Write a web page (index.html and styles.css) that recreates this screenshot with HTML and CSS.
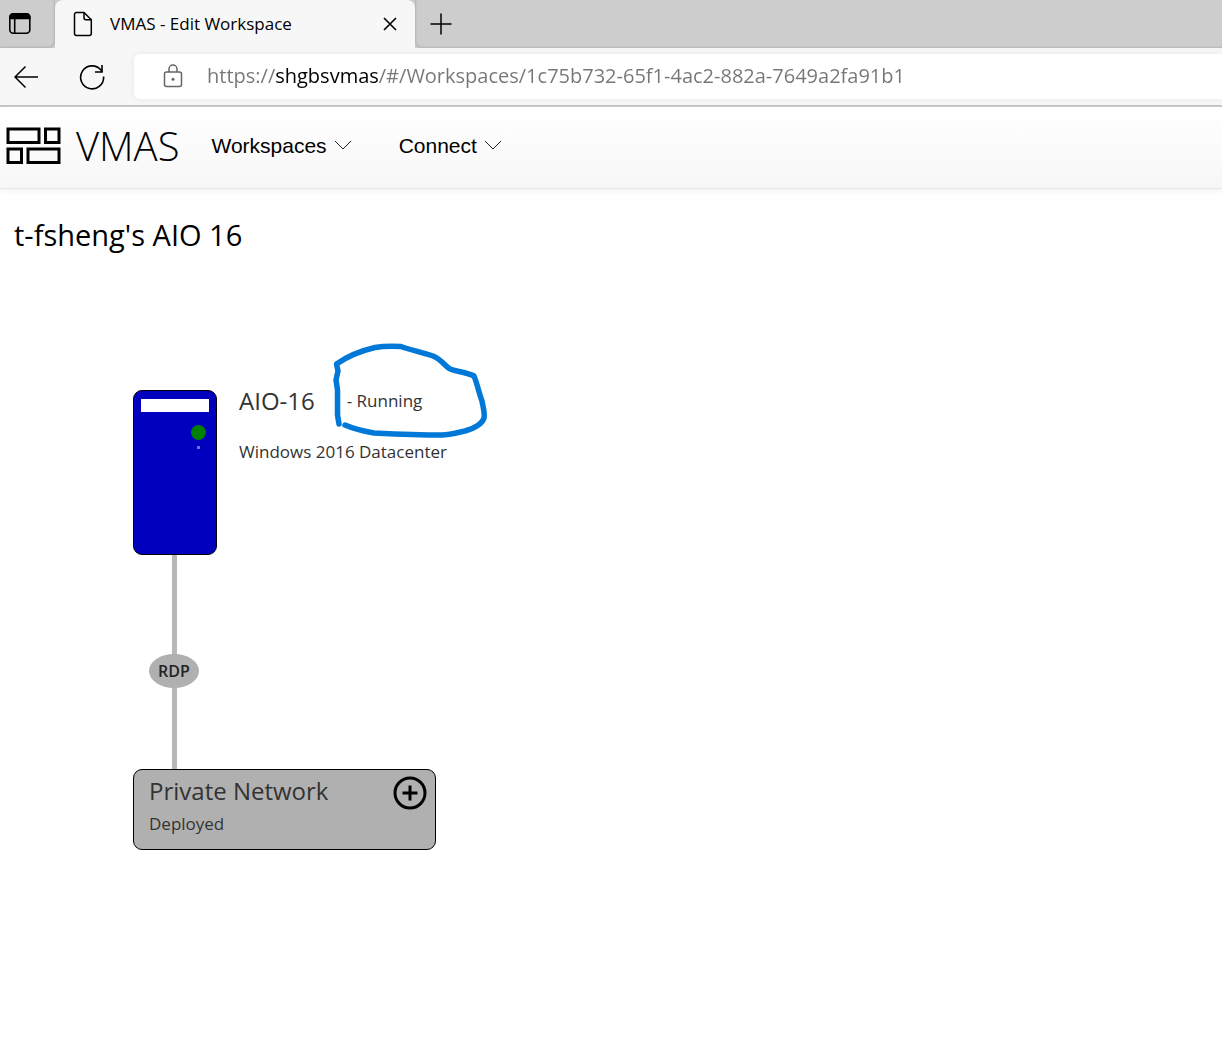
FILE: index.html
```html
<!DOCTYPE html>
<html lang="en">
<head>
<meta charset="utf-8">
<title>VMAS - Edit Workspace</title>
<link rel="stylesheet" href="styles.css">
</head>
<body>
<div class="browser">
  <div class="tab-strip">
    <button class="tab-actions" type="button" aria-label="Tab actions">
      <svg width="24" height="24" viewBox="0 0 24 24" fill="none" stroke="#000" stroke-width="1.6"><rect x="1.8" y="1.8" width="20" height="19.4" rx="3.5"/><path d="M2 5.500V5a3.200 3.200 0 0 1 3.200-3.200h13.400A3.200 3.200 0 0 1 21.800 5v1.500H2z" fill="#000"/><path d="M6.700 6v15"/></svg>
    </button>
    <div class="tab">
      <svg class="tab-page" width="20" height="26" viewBox="0 0 20 26" fill="none" stroke="#000" stroke-width="1.500" stroke-linejoin="round"><path d="M3.500 1.500H11L18.300 8.800V22.500a2 2 0 0 1-2 2H3.500a2 2 0 0 1-2-2v-19a2 2 0 0 1 2-2z"/><path d="M11 1.500v5.300a2 2 0 0 0 2 2h5.300"/></svg>
      <span class="tab-title">VMAS - Edit Workspace</span>
      <button class="tab-close" type="button" aria-label="Close tab">
        <svg width="14" height="14" viewBox="0 0 14 14" stroke="#000" stroke-width="1.600"><path d="M1 1l12 12M13 1L1 13"/></svg>
      </button>
    </div>
    <button class="tab-new" type="button" aria-label="New tab">
      <svg width="22" height="22" viewBox="0 0 22 22" stroke="#000" stroke-width="1.500"><path d="M11 .5v21M.5 11h21"/></svg>
    </button>
  </div>
  <div class="toolbar">
    <button class="tool" type="button" aria-label="Back">
      <svg width="26" height="24" viewBox="0 0 26 24" fill="none" stroke="#000" stroke-width="1.500"><path d="M12.500 1.500L2 12l10.500 10.500M2 12h23"/></svg>
    </button>
    <button class="tool" type="button" aria-label="Refresh">
      <svg width="26" height="26" viewBox="0 0 26 26" fill="none" stroke="#000" stroke-width="1.600"><path d="M24.600 12.500A11.500 11.500 0 1 1 21.800 5.800L23 8"/><path d="M23 1v7h-7"/></svg>
    </button>
    <label class="address">
      <svg width="20" height="24" viewBox="0 0 20 24" fill="none" stroke="#666" stroke-width="1.500"><rect x="1.500" y="8" width="17" height="14.500" rx="2"/><path d="M6 8V5a4 4 0 0 1 8 0v3"/><circle cx="10" cy="15.200" r="1.500" fill="#666" stroke="none"/></svg>
      <input class="address-input" type="text" aria-label="Address" value="https://shgbsvmas/#/Workspaces/1c75b732-65f1-4ac2-882a-7649a2fa91b1">
    </label>
  </div>
</div>

<header class="site-header">
  <a class="brand" href="#">
    <svg width="56" height="38" viewBox="0 0 56 38" fill="none" stroke="#000" stroke-width="3"><path d="M2 2h31v13.500H2zM39.500 2H53v13.500H39.500zM2 22h13.500v13.500H2zM22 22h31v13.500H22z"/></svg>
    <span>VMAS</span>
  </a>
  <nav class="menu">
    <button class="menu-item" type="button">Workspaces
      <svg width="18" height="12" viewBox="0 0 18 12" fill="none" stroke="#222"><path d="M1 1l8 8 8-8"/></svg>
    </button>
    <button class="menu-item" type="button">Connect
      <svg width="18" height="12" viewBox="0 0 18 12" fill="none" stroke="#222"><path d="M1 1l8 8 8-8"/></svg>
    </button>
  </nav>
</header>

<main class="workspace">
  <h1 class="workspace-title">t-fsheng's AIO 16</h1>
  <div class="canvas">
    <div class="link"></div>
    <section class="machine">
      <div class="server">
        <div class="server-slot"></div>
        <div class="server-light"></div>
        <div class="server-dot"></div>
      </div>
      <div class="machine-info">
        <div class="machine-head">
          <h2 class="node-name">AIO-16</h2>
          <span class="node-text">- Running</span>
        </div>
        <p class="node-text">Windows 2016 Datacenter</p>
      </div>
    </section>
    <span class="protocol">RDP</span>
    <section class="network">
      <div class="network-info">
        <h2 class="node-name">Private Network</h2>
        <p class="node-text">Deployed</p>
      </div>
      <button class="network-add" type="button" aria-label="Add to network">
        <svg width="34" height="34" viewBox="0 0 34 34" fill="none" stroke="#000" stroke-width="3"><circle cx="17" cy="17" r="15"/><path d="M17 9.500v15M9.500 17h15"/></svg>
      </button>
    </section>
    <svg class="ink" width="160" height="100" viewBox="330 340 160 100" fill="none" stroke="#0078d7" stroke-width="5.500" stroke-linecap="round" stroke-linejoin="round"><path d="M339 424L337.500 415V390L336 380L338 371L336.500 364C345 358 360 351 375 347.500C384 346 391 346 401 346.500C410 350 422 352 433 356C442 360 445 366 450 369C458 372 466 372 474 376C477 383 479 393 482 401C483 407 485 413 484 418C482 425 472 429 465 431C456 433 448 435 442 435C420 435 395 434 374 433C363 431 354 429 345 425"/></svg>
  </div>
</main>
</body>
</html>
```
FILE: styles.css
```css
* {
  box-sizing: border-box;
}

body {
  margin: 0;
  background: #fff;
  color: #000;
  font-family: "Open Sans", "Noto Sans", sans-serif;
}

h1, h2, p {
  margin: 0;
  font-weight: 400;
}

button {
  margin: 0;
  padding: 0;
  border: 0;
  background: none;
  color: inherit;
  cursor: pointer;
}

svg {
  display: block;
  flex: none;
}

.browser {
  background: #f7f7f7;
  border-bottom: 2px solid #bdbdbd;
}

.tab-strip {
  display: flex;
  height: 48px;
  background: #cdcdcd;
}

.tab-actions {
  display: flex;
  align-items: center;
  width: 55px;
  padding-left: 8px;
  border-bottom-right-radius: 6px;
  box-shadow: inset -1px -1px 2px #b4b4b4;
}

.tab {
  display: flex;
  align-items: center;
  width: 360px;
  padding: 0 18px;
  background: #f7f7f7;
  border-radius: 8px 8px 0 0;
}

.tab-title {
  flex: 1;
  margin-left: 17px;
  padding-bottom: 2px;
  font-size: 17px;
  white-space: nowrap;
}

.tab-new {
  display: flex;
  flex: 1;
  align-items: center;
  padding-left: 15px;
  border-bottom-left-radius: 6px;
  box-shadow: inset 1px -1px 2px #b4b4b4;
}

.toolbar {
  display: flex;
  align-items: center;
  gap: 40px;
  padding: 6px 0 6px 13px;
}

.tool {
  flex: none;
}

.address {
  display: flex;
  flex: 1;
  align-items: center;
  gap: 24px;
  height: 45px;
  margin-left: -11px;
  padding: 0 0 2px 29px;
  background: #fff;
  border-radius: 6px 0 0 6px;
  box-shadow: 0 0 6px #e8e8e8;
}

/* The host name is dark, the rest of the address is grey. */
.address-input {
  flex: 1;
  min-width: 0;
  padding: 0;
  border: 0;
  outline: 0;
  background: linear-gradient(90deg, #767676 68px, #000 68px 171px, #767676 171px);
  -webkit-background-clip: text;
  background-clip: text;
  -webkit-text-fill-color: transparent;
  font-family: inherit;
  font-size: 20px;
  line-height: 32px;
}

.site-header {
  display: flex;
  align-items: center;
  gap: 32px;
  height: 82px;
  padding: 0 0 3px 6px;
  background: linear-gradient(#fff, #f7f7f7);
  border-bottom: 1px solid #e6e6e6;
  box-shadow: 0 2px 6px #f2f2f2;
}

.brand {
  display: flex;
  align-items: center;
  gap: 14px;
  color: #000;
  font-size: 40px;
  font-weight: 300;
  line-height: 48px;
  text-decoration: none;
}

.menu {
  display: flex;
  gap: 47px;
}

.menu-item {
  display: flex;
  align-items: center;
  gap: 7px;
  font-family: "Liberation Sans", Arial, sans-serif;
  font-size: 21px;
}

.workspace-title {
  padding: 26px 14px 0;
  font-size: 29px;
  line-height: 40px;
}

.canvas {
  position: relative;
  min-height: 640px;
  color: #333;
}

.link {
  position: absolute;
  top: 300px;
  left: 172px;
  width: 5px;
  height: 214px;
  background: #b8b8b8;
}

.machine {
  position: absolute;
  top: 135px;
  left: 133px;
  display: flex;
  gap: 22px;
}

.server {
  display: flex;
  flex-direction: column;
  width: 84px;
  height: 165px;
  padding: 8px 7px;
  background: #0000be;
  border: 1px solid #000;
  border-radius: 9px;
}

.server-slot {
  height: 13px;
  background: #fff;
}

.server-light {
  width: 15px;
  height: 15px;
  margin: 13px 3px 0 auto;
  background: #008000;
  border-radius: 50%;
}

.server-dot {
  width: 3px;
  height: 3px;
  margin: 6px 9px 0 auto;
  background: #7070e0;
}

.machine-info {
  display: flex;
  flex-direction: column;
  gap: 28px;
}

.machine-head {
  display: flex;
  align-items: center;
  gap: 32px;
  height: 22px;
}

.node-name {
  font-size: 24px;
  line-height: 30px;
  white-space: nowrap;
}

.node-text {
  font-size: 17px;
  line-height: 24px;
  white-space: nowrap;
}

.protocol {
  position: absolute;
  top: 399px;
  left: 149px;
  width: 50px;
  height: 34px;
  background: #b0b0b0;
  border-radius: 50%;
  color: #222;
  font-size: 16px;
  font-weight: 600;
  line-height: 34px;
  text-align: center;
}

.network {
  position: absolute;
  top: 514px;
  left: 133px;
  display: flex;
  justify-content: space-between;
  align-items: flex-start;
  width: 303px;
  height: 81px;
  padding: 6px 8px 6px 15px;
  background: #b0b0b0;
  border: 1px solid #000;
  border-radius: 9px;
}

.network-info {
  display: flex;
  flex-direction: column;
  gap: 6px;
}

.ink {
  position: absolute;
  top: 85px;
  left: 330px;
}
```
